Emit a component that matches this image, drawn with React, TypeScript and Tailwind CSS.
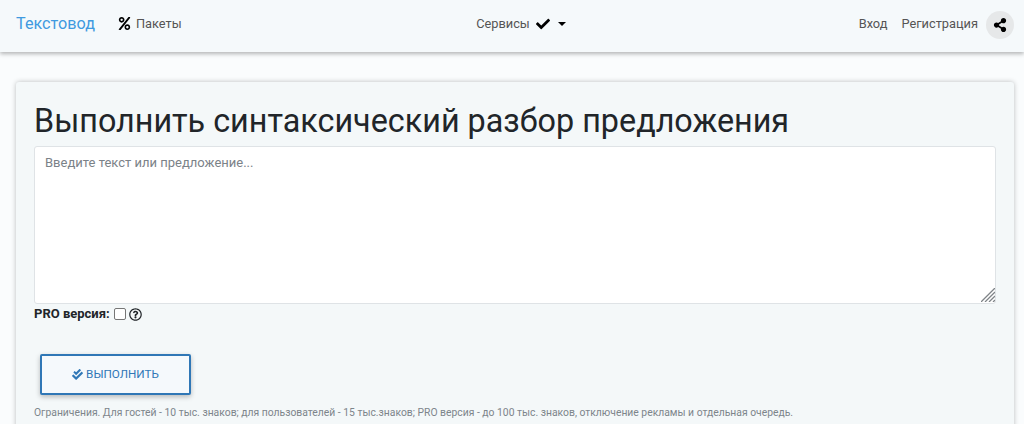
import React from 'react'
import { FaCheck, FaCheckDouble, FaPercent, FaRegQuestionCircle, FaShareAlt } from 'react-icons/fa'

function Navbar() {
  return (
    <nav className="relative flex h-[52px] items-center justify-between bg-[#f5f9fb] pb-1 pl-4 pr-[10px] shadow-[0_2px_4px_rgba(0,0,0,0.28)]">
      <div className="flex w-[352px] items-center">
        <a className="text-[16.2px] text-[#3f9ae0]">Текстовод</a>
        <a className="ml-[23px] flex items-center text-[12.8px] text-[#555]">
          <FaPercent className="mr-[5px] text-[13px] text-black" />
          Пакеты
        </a>
      </div>
      <a className="flex items-center text-[12.8px] text-[#555]">
        Сервисы
        <FaCheck className="ml-[6px] text-[14px] text-black" />
        <span className="ml-[8px] h-0 w-0 border-x-[4px] border-t-[4px] border-x-transparent border-t-black" />
      </a>
      <div className="flex w-[340px] items-center justify-end text-[12.8px] text-[#555]">
        <a>Вход</a>
        <a className="ml-[14px]">Регистрация</a>
        <span className="ml-[8px] mt-[1px] flex h-7 w-7 items-center justify-center rounded-full bg-[#e6e8e9]">
          <FaShareAlt className="text-[14px] text-black" />
        </span>
      </div>
    </nav>
  )
}

function ResizeGrip() {
  return (
    <svg className="pointer-events-none absolute bottom-[2px] right-[1px] h-[14px] w-[14px]" viewBox="0 0 14 14" stroke="#7f8488" strokeWidth="1.3">
      <path d="M0 14 14 0M4 14 14 4M8 14 14 8M12 14 14 12" />
    </svg>
  )
}

export default function App() {
  return (
    <div className="h-[424px] overflow-hidden bg-[#fafcfd] font-['Roboto',sans-serif]">
      <Navbar />
      <main className="pl-4 pr-[10px] pt-[30px]">
        <section className="h-[400px] rounded-[3px] bg-[#f4f8f9] px-[18px] pt-[19px] shadow-[0_0_5px_rgba(0,0,0,0.25)]">
          <h1 className="text-[32.35px] leading-[40px] text-[#212529]">Выполнить синтаксический разбор предложения</h1>
          <div className="relative mt-[5px]">
            <textarea
              className="block h-[158px] w-full resize-none rounded-[3px] border border-[#dfe3e6] bg-white px-[10px] py-[6px] text-[13px] leading-[20px] text-[#333] outline-none placeholder:text-[#7b8288]"
              placeholder="Введите текст или предложение..."
            />
            <ResizeGrip />
          </div>
          <div className="mt-[2px] flex h-[16px] items-center text-[13px] font-bold text-[#212529]">
            PRO версия:
            <span className="ml-1 h-3 w-3 rounded-[2px] border border-[#767676] bg-white" />
            <FaRegQuestionCircle className="ml-[3px] text-[13px] font-normal" />
          </div>
          <button className="ml-[6px] mt-[32px] flex h-[41px] w-[151px] items-center justify-center rounded-[2px] border-2 border-[#2f77b6] bg-[#f5f9fc] text-[11.7px] text-[#2f77b6] shadow-[0_2px_5px_rgba(0,0,0,0.25)]">
            <FaCheckDouble className="mr-[3px] text-[11px]" />
            ВЫПОЛНИТЬ
          </button>
          <p className="mt-[11px] text-[10.35px] leading-[14px] text-[#7d858b]">
            Ограничения. Для гостей - 10 тыс. знаков; для пользователей - 15 тыс.знаков; PRO версия - до 100 тыс. знаков, отключение рекламы и отдельная очередь.
          </p>
        </section>
      </main>
    </div>
  )
}
